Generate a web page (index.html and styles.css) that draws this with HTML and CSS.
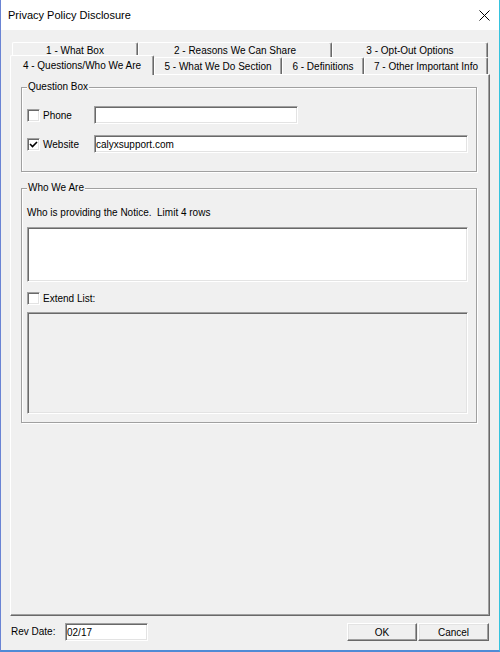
FILE: index.html
```html
<!DOCTYPE html>
<html lang="en">
<head>
    <meta charset="UTF-8">
    <title>Privacy Policy Disclosure</title>
    <link rel="stylesheet" href="styles.css">
</head>
<body>
    <div class="window">
        <div class="titlebar">
            <span class="title">Privacy Policy Disclosure</span>
            <svg class="close" width="11" height="11" viewBox="0 0 11 11"><path d="M0.5 0.5L10.5 10.5M10.5 0.5L0.5 10.5" stroke="#000" stroke-width="1"/></svg>
        </div>
        <div class="content">
            <div class="tab-row back">
                <div class="tab t1">1 - What Box</div>
                <div class="tab t2">2 - Reasons We Can Share</div>
                <div class="tab t3">3 - Opt-Out Options</div>
            </div>
            <div class="tab-row front">
                <div class="tab active">4 - Questions/Who We Are</div>
                <div class="tab t5">5 - What We Do Section</div>
                <div class="tab t6">6 - Definitions</div>
                <div class="tab t7">7 - Other Important Info</div>
            </div>
            <div class="panel">
                <div class="group group-question">
                    <div class="group-title">Question Box</div>
                    <div class="field-row row-phone">
                        <label class="check"><span class="box"></span>Phone</label>
                        <input class="sunken input-phone" type="text" value="" disabled>
                    </div>
                    <div class="field-row row-website">
                        <label class="check"><span class="box"><svg width="11" height="11" viewBox="0 0 11 11"><path d="M2 5L4.5 7.5L9 3" stroke="#000" stroke-width="1.6" fill="none"/></svg></span>Website</label>
                        <input class="sunken input-website" type="text" value="calyxsupport.com">
                    </div>
                </div>
                <div class="group group-who">
                    <div class="group-title">Who We Are</div>
                    <div class="hint">Who is providing the Notice.&nbsp; Limit 4 rows</div>
                    <textarea class="sunken notice"></textarea>
                    <label class="check extend"><span class="box"></span>Extend List:</label>
                    <textarea class="sunken extend-list" disabled></textarea>
                </div>
            </div>
            <div class="footer">
                <span class="rev-label">Rev Date:</span>
                <input class="sunken rev-input" type="text" value="02/17">
                <span class="spacer"></span>
                <button class="btn btn-ok">OK</button>
                <button class="btn btn-cancel">Cancel</button>
            </div>
        </div>
    </div>
</body>
</html>
```

FILE: styles.css
```css
* {
    box-sizing: border-box;
}
body {
    margin: 0;
    font-family: "Liberation Sans", Arial, sans-serif;
    font-size: 10px;
    color: #000;
    background: #fff;
}
.window {
    width: 500px;
    height: 652px;
    display: flex;
    flex-direction: column;
    background: #f0f0f0;
    border-left: 1px solid #6a84d4;
    border-right: 1px solid #35c3de;
    border-bottom: 2px solid #4f8bd6;
}
.titlebar {
    height: 30px;
    flex: none;
    background: #fff;
    display: flex;
    align-items: center;
    justify-content: space-between;
    padding: 0 9px 0 7px;
}
.title {
    font-size: 11px;
}

.content {
    flex: 1;
    display: flex;
    flex-direction: column;
    padding: 12px 9px 0 9px;
}

/* tabs */
.tab-row {
    display: flex;
    flex: none;
}
.tab-row.back {
    height: 15px;
    padding-left: 2px;
}
.tab-row.front {
    height: 17px;
    align-items: flex-start;
}
.tab {
    flex: none;
    height: 100%;
    display: flex;
    align-items: center;
    justify-content: center;
    white-space: nowrap;
    background: #f0f0f0;
    border-top: 1px solid #fff;
    border-left: 1px solid #fff;
    border-right: 1px solid #696969;
    box-shadow: inset -1px 0 0 #a0a0a0;
    border-radius: 2px 2px 0 0;
}
.t1 { width: 126px; }
.t2 { width: 194px; }
.t3 { width: 156px; }
.t5 { width: 128px; height: 17px; }
.t6 { width: 82px; height: 17px; }
.t7 { width: 124px; height: 17px; }
.tab.active {
    width: 144px;
    height: 20px;
    margin-top: -2px;
    margin-bottom: -1px;
    position: relative;
    z-index: 1;
    padding-bottom: 1px;
}

.panel {
    flex: none;
    height: 542px;
    border-top: 1px solid #fff;
    border-left: 1px solid #fff;
    border-right: 1px solid #696969;
    border-bottom: 1px solid #696969;
    box-shadow: inset -1px -1px 0 #a0a0a0;
    padding: 0 12px 0 10px;
}

/* group boxes */
.group {
    width: 456px;
    border: 1px solid #a0a0a0;
    box-shadow: inset 1px 1px 0 #fff, 1px 1px 0 #fff;
}
.group-title {
    width: max-content;
    height: 12px;
    line-height: 12px;
    margin-top: -7px;
    padding: 0 1px;
    background: #f0f0f0;
}
.group-question {
    margin-top: 12px;
    padding: 0 7px 18px 5px;
}
.group-who {
    margin-top: 16px;
    padding: 0 7px 8px 5px;
}

.field-row {
    display: flex;
    align-items: center;
    height: 18px;
}
.row-phone {
    margin-top: 13px;
}
.row-website {
    margin-top: 11px;
}
.check {
    display: flex;
    align-items: center;
    width: 67px;
}
.box {
    width: 13px;
    height: 13px;
    margin-right: 3px;
    background: #fff;
    border: 1px solid;
    border-color: #a0a0a0 #fff #fff #a0a0a0;
    box-shadow: inset 1px 1px 0 #696969, inset -1px -1px 0 #e3e3e3;
    display: flex;
    align-items: center;
    justify-content: center;
}

.sunken {
    background: #fff;
    border: 1px solid;
    border-color: #a0a0a0 #fff #fff #a0a0a0;
    box-shadow: inset 1px 1px 0 #696969, inset -1px -1px 0 #e3e3e3;
    font-family: "Liberation Sans", Arial, sans-serif;
    font-size: 10px;
    color: #000;
    outline: none;
    resize: none;
    margin: 0;
}
input.sunken {
    height: 18px;
    padding: 0 0 0 1px;
}
.input-phone {
    width: 204px;
}
.input-website {
    width: 374px;
}

.hint {
    height: 12px;
    line-height: 12px;
    margin-top: 13px;
}
.notice {
    display: block;
    width: 441px;
    height: 55px;
    margin-top: 8px;
}
.extend {
    width: auto;
    height: 13px;
    margin-top: 10px;
}
.extend-list {
    display: block;
    width: 441px;
    height: 102px;
    margin-top: 7px;
    background: #f0f0f0;
}

/* bottom bar */
.footer {
    flex: 1;
    display: flex;
    align-items: flex-start;
    padding: 7px 1px 0 1px;
}
.rev-label {
    width: 54px;
    height: 18px;
    line-height: 18px;
}
.rev-input {
    width: 83px;
}
.spacer {
    flex: 1;
}
.btn {
    height: 18px;
    padding: 0;
    font-family: "Liberation Sans", Arial, sans-serif;
    font-size: 10px;
    color: #000;
    background: #f0f0f0;
    border: 1px solid;
    border-color: #fff #696969 #696969 #fff;
    box-shadow: inset -1px -1px 0 #a0a0a0, inset 1px 1px 0 #e3e3e3;
}
.btn-ok {
    width: 70px;
    margin-right: 1px;
}
.btn-cancel {
    width: 71px;
}
```
